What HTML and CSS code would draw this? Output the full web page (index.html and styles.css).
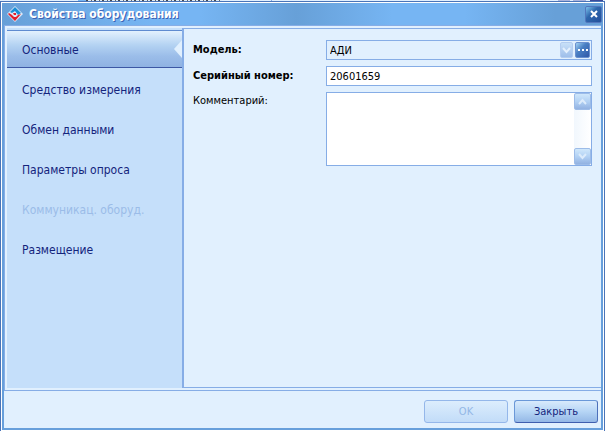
FILE: index.html
```html
<!DOCTYPE html>
<html lang="ru">
<head>
<meta charset="UTF-8">
<meta name="viewport" content="width=device-width, initial-scale=1.0">
<title>Свойства оборудования</title>
<link rel="stylesheet" href="styles.css">
</head>
<body>
<div class="backdrop">
  <div class="backdrop-title"></div>
  <div class="backdrop-buttons"></div>
</div>
<div class="window">
  <header class="title-bar">
    <svg class="logo" width="16" height="16" viewBox="0 0 16 16">
      <path d="M8 0L16 8L8 16L0 8Z" fill="#dbe9f8"/>
      <path d="M8 1L14 7L11 9L8 5L5 7L3 6Z" fill="#1b8fd6"/>
      <path d="M1 8L2 7L5 9L7 11L9 11L11 9L14 8L8 15Z" fill="#e3202b"/>
      <path d="M6 7H9V9H7Z" fill="#e3202b"/>
    </svg>
    <h1 class="title">Свойства оборудования</h1>
    <button class="close-button" type="button" aria-label="Закрыть окно">
      <svg width="8" height="8" viewBox="0 0 8 8"><path d="M1 1L7 7M7 1L1 7" stroke="#fff" stroke-width="2"/></svg>
    </button>
  </header>

  <div class="content">
    <nav class="sidebar">
      <button class="tab active" type="button">Основные</button>
      <button class="tab" type="button">Средство измерения</button>
      <button class="tab" type="button">Обмен данными</button>
      <button class="tab" type="button">Параметры опроса</button>
      <button class="tab" type="button" disabled>Коммуникац. оборуд.</button>
      <button class="tab" type="button">Размещение</button>
    </nav>

    <form class="panel" id="deviceForm">
      <label class="label required" for="model">Модель:</label>
      <div class="model-field">
        <input class="model-input" id="model" type="text" value="АДИ" readonly>
        <button class="small-button faded" type="button" aria-label="Список" disabled>
          <svg width="9" height="7" viewBox="0 0 9 7"><path d="M1 1L4.500 5L8 1" fill="none" stroke="#e4f0fd" stroke-width="2"/></svg>
        </button>
        <button class="small-button" type="button" aria-label="Выбрать">
          <svg width="10" height="2" viewBox="0 0 10 2"><path d="M0 0H2V2H0ZM4 0H6V2H4ZM8 0H10V2H8Z" fill="#fff"/></svg>
        </button>
      </div>

      <label class="label required" for="serial">Серийный номер:</label>
      <input class="text-input" id="serial" type="text" value="20601659">

      <label class="label comment-label" for="comment">Комментарий:</label>
      <div class="comment-field">
        <textarea class="comment-input" id="comment"></textarea>
        <div class="scroll">
          <button class="scroll-button" type="button" aria-label="Вверх" disabled>
            <svg width="9" height="7" viewBox="0 0 9 7"><path d="M1 6L4.500 2L8 6" fill="none" stroke="#dcebfb" stroke-width="2"/></svg>
          </button>
          <button class="scroll-button" type="button" aria-label="Вниз" disabled>
            <svg width="9" height="7" viewBox="0 0 9 7"><path d="M1 1L4.500 5L8 1" fill="none" stroke="#dcebfb" stroke-width="2"/></svg>
          </button>
        </div>
      </div>
    </form>
  </div>

  <footer class="footer">
    <button class="button" type="submit" form="deviceForm" disabled>OK</button>
    <button class="button" type="button">Закрыть</button>
  </footer>
</div>
</body>
</html>
```

FILE: styles.css
```css
* {
  box-sizing: border-box;
}

body {
  margin: 0;
  height: 100vh;
  display: flex;
  flex-direction: column;
  font-family: "DejaVu Sans Condensed", "DejaVu Sans", sans-serif;
  font-size: 12px;
  color: #000;
  background-color: #fff;
}

button,
input,
textarea {
  font: inherit;
  margin: 0;
  padding: 0;
  border: 0;
  outline: 0;
}

/* edge of the window that lies behind the dialog */
.backdrop {
  display: flex;
  justify-content: space-between;
  height: 1px;
  padding: 0 2px 0 78px;
  background-color: #e1f0fe;
}

.backdrop-title {
  width: 194px;
  border-left: 8px solid #76b5f3;
  border-right: 1px solid #86ade6;
  background: repeating-linear-gradient(to right, #45484f 0 2px, #dcebf8 2px 5px, #666 5px 6px, #dcebf8 6px 8px) no-repeat 0 0 / 136px 1px;
}

.backdrop-buttons {
  width: 45px;
  background: linear-gradient(to right, #a9b3dc 12px, #e1f0fe 12px 15px, #a9b3dc 15px 28px, #e1f0fe 28px 32px, #3b4a9a 32px);
}

.window {
  flex: 1;
  display: flex;
  flex-direction: column;
  border: 1px solid #4a74b8;
  border-bottom: 0;
  padding: 1px;
  background-color: #fff;
}

.title-bar {
  display: flex;
  align-items: center;
  height: 22px;
  padding: 0 1px 0 5px;
  background: linear-gradient(to right, #67a0d8, #76b5f3 25%, #76b5f3 33%, #67a0d8 49%, #76b5f3 65%, #76b5f3 77%, #67a0d8 92%);
}

.logo {
  flex: none;
}

.title {
  flex: 1;
  margin: 0 0 0 6px;
  font-size: 12px;
  line-height: 20px;
  color: #fff;
  text-shadow: 1px 1px 0 #3c62b4;
}

.close-button {
  display: flex;
  align-items: center;
  justify-content: center;
  width: 17px;
  height: 17px;
  border: 1px solid #5277bd;
  border-radius: 2px;
  background: linear-gradient(to bottom right, #7cc0ea, #2f67ad 40%, #24509c);
}

.content {
  flex: 1;
  display: flex;
  margin: 0 2px;
  padding: 2px 0 2px 2px;
  border: solid #86ade6;
  border-width: 1px 0 1px 1px;
  background-color: #e1f0fe;
  box-shadow: -2px 0 0 #679fdb, 2px 0 0 #679fdb;
}

.sidebar {
  display: flex;
  flex-direction: column;
  width: 175px;
  padding-top: 2px;
  background-color: #c5dffa;
}

.tab {
  position: relative;
  height: 40px;
  padding-left: 15px;
  background: none;
  color: #14247c;
  text-align: left;
}

.tab.active {
  height: 38px;
  margin-bottom: 2px;
  padding-top: 2px;
  border-top: 1px solid #5f8bd0;
  border-bottom: 1px solid #3c57a4;
  background: linear-gradient(#e3f1fe, #b3d2f2 40%, #9bbde9 70%, #8fb2e2);
}

/* pointer towards the panel */
.tab.active::after {
  content: "";
  position: absolute;
  top: 9px;
  right: 0;
  width: 8px;
  height: 18px;
  background-color: #e1f0fe;
  clip-path: polygon(0 50%, 100% 0, 100% 100%);
}

.tab:disabled {
  color: #9bbce8;
}

.panel {
  flex: 1;
  display: grid;
  grid-template-columns: 133px 1fr;
  grid-template-rows: 20px 20px 74px;
  gap: 6px 0;
  padding: 11px 9px 0 9px;
  border: solid #86ade6;
  border-width: 1px 0 1px 2px;
}

.label {
  font-size: 11px;
  line-height: 20px;
}

.required {
  font-weight: bold;
}

.comment-label {
  line-height: 18px;
}

.model-field,
.text-input,
.comment-field {
  border: 1px solid #86ade6;
  font-size: 11px;
}

.model-field {
  display: flex;
  align-items: center;
  gap: 2px;
  padding-right: 1px;
}

.model-input {
  flex: 1;
  min-width: 0;
  padding-left: 3px;
  background: none;
}

.text-input {
  width: 100%;
  padding-left: 3px;
  background-color: #fff;
}

.small-button {
  display: flex;
  align-items: center;
  justify-content: center;
  width: 15px;
  height: 16px;
  border: 1px solid #6a90cf;
  border-radius: 2px;
  background: linear-gradient(to bottom right, #a4d4f4, #4a80c4 40%, #3058a8);
}

.faded {
  width: 13px;
  border-color: #b4cdf0;
  background: linear-gradient(#c8e0f8, #9fbfea);
}

.comment-field {
  display: flex;
  background-color: #fff;
}

.comment-input {
  flex: 1;
  min-width: 0;
  padding: 2px 3px;
  resize: none;
  background-color: #fff;
}

.scroll {
  display: flex;
  flex-direction: column;
  justify-content: space-between;
  width: 17px;
  background: linear-gradient(to right, #f1f7fd, #fff);
}

.scroll-button {
  display: flex;
  align-items: center;
  justify-content: center;
  width: 17px;
  height: 17px;
  border: 1px solid #9dbce8;
  border-radius: 2px;
  background: linear-gradient(#cfe7fb, #b2d1f4 50%, #92b2e2);
}

.footer {
  display: flex;
  justify-content: flex-end;
  gap: 6px;
  padding: 9px 3px 5px;
  border: 2px solid #679fdb;
  border-top: 0;
  background-color: #e1f0fe;
}

.button {
  width: 84px;
  height: 23px;
  border: 1px solid #6a98d8;
  border-bottom-color: #3f5fae;
  border-right-color: #4d70ba;
  border-radius: 3px;
  background: linear-gradient(#d8eafc, #b6d5f5 50%, #94b8e6);
  font-size: 11px;
  color: #14247c;
}

.button:disabled {
  border-color: #94b7ea;
  background: linear-gradient(#dcedfd, #c2dcf8);
  color: #94b7e6;
}
```
